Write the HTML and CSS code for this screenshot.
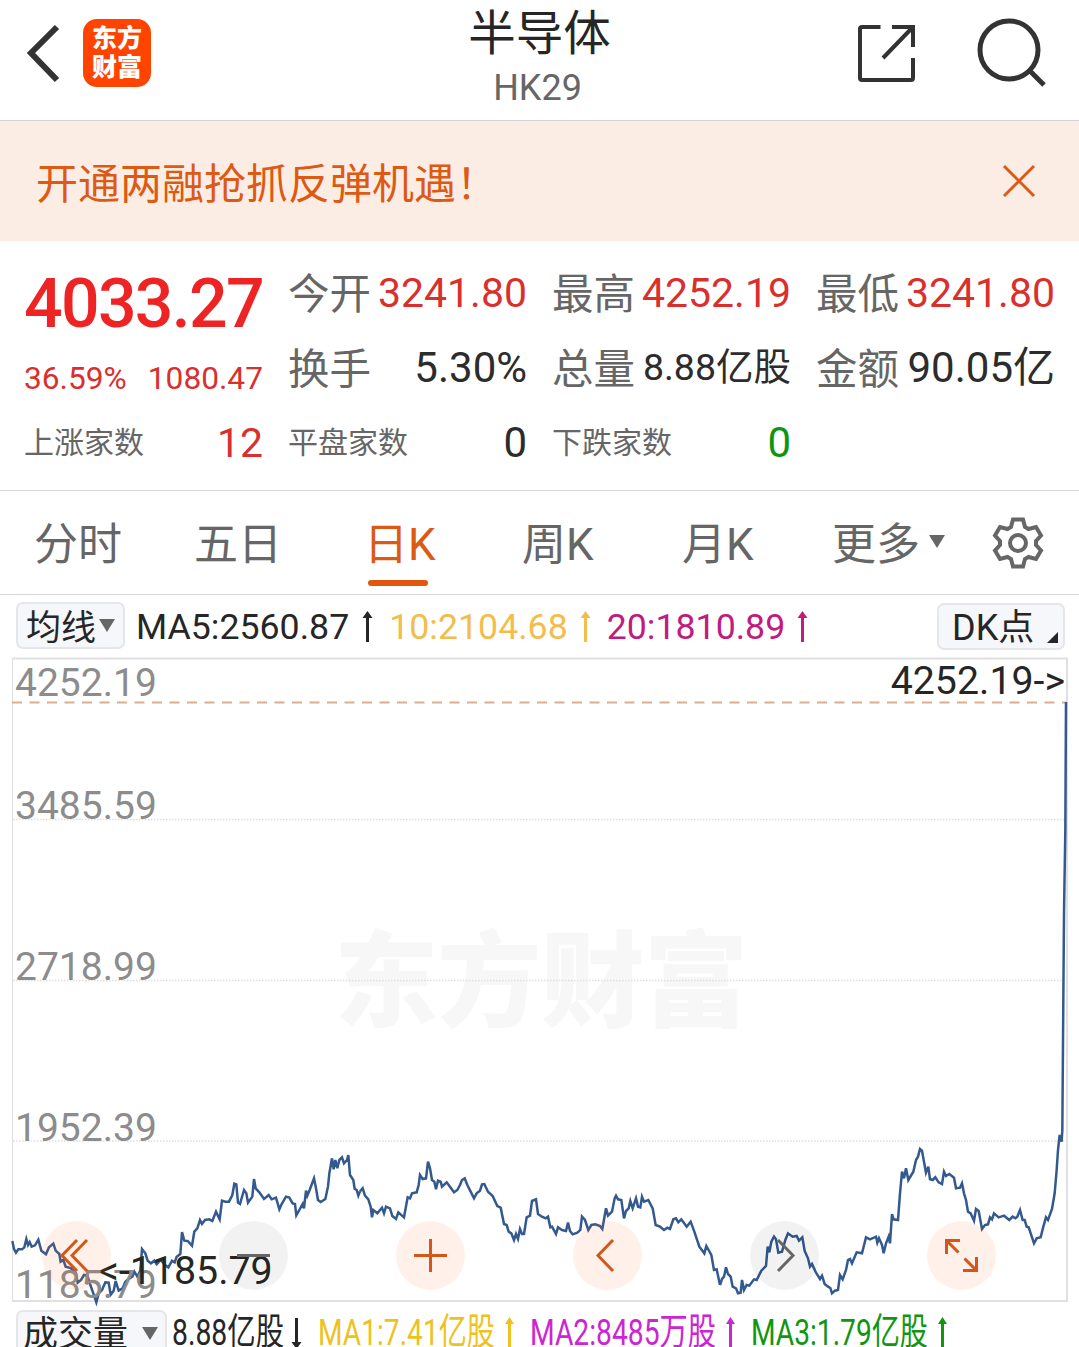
FILE: index.html
```html
<!DOCTYPE html>
<html lang="zh-CN">
<head>
    <meta charset="UTF-8">
    <meta name="viewport" content="width=device-width, initial-scale=1.0">
    <title>半导体 HK29</title>
    <link rel="stylesheet" href="styles.css">
</head>
<body>
    <!-- Header -->
    <header class="header">
        <div class="header-left">
            <svg class="back" width="36" height="60" viewBox="0 0 36 60"><path d="M33 4L7 30L33 57" /></svg>
            <div class="logo"><span>东方</span><span>财富</span></div>
        </div>
        <div class="header-title">
            <h1>半导体</h1>
            <p>HK29</p>
        </div>
        <div class="header-right">
            <svg class="share" width="60" height="60" viewBox="0 0 60 60">
                <path d="M24.500 4H6Q4 4 4 6V55Q4 57 6 57H55Q57 57 57 55V35M36 4H57V24M56 5L27 35" />
            </svg>
            <svg class="search" width="72" height="72" viewBox="0 0 72 72">
                <circle cx="34" cy="33" r="29" />
                <path d="M54 53L69 68" />
            </svg>
        </div>
    </header>

    <!-- Promo banner -->
    <div class="banner">
        <span>开通两融抢抓反弹机遇！</span>
        <svg width="34" height="34" viewBox="0 0 34 34"><path d="M2 2L32 32M32 2L2 32" /></svg>
    </div>

    <!-- Quote -->
    <section class="quote">
        <div class="col">
            <div class="price">4033.27</div>
            <div class="row change"><span>36.59%</span><span>1080.47</span></div>
            <div class="row count"><label>上涨家数</label><b class="red">12</b></div>
        </div>
        <div class="col">
            <div class="row"><label>今开</label><b class="red">3241.80</b></div>
            <div class="row"><label>换手</label><b>5.30%</b></div>
            <div class="row count"><label>平盘家数</label><b>0</b></div>
        </div>
        <div class="col">
            <div class="row"><label>最高</label><b class="red">4252.19</b></div>
            <div class="row"><label>总量</label><b class="small">8.88亿股</b></div>
            <div class="row count"><label>下跌家数</label><b class="green">0</b></div>
        </div>
        <div class="col">
            <div class="row"><label>最低</label><b class="red">3241.80</b></div>
            <div class="row"><label>金额</label><b>90.05亿</b></div>
        </div>
    </section>

    <!-- Period tabs -->
    <nav class="tabs">
        <a class="t1">分时</a>
        <a class="t2">五日</a>
        <a class="t3 active">日K</a>
        <a class="t4">周K</a>
        <a class="t5">月K</a>
        <a class="t6">更多<i class="caret"></i></a>
        <svg class="gear" width="54" height="54" viewBox="-27 -27 54 54">
            <path d="M-5 -23.500H5L7 -16L10.500 -14L18 -16L23 -7.500L18 -2V2L23 7.500L18 16L10.500 14L7 16L5 23.500H-5L-7 16L-10.500 14L-18 16L-23 7.500L-18 2V-2L-23 -7.500L-18 -16L-10.500 -14L-7 -16Z" />
            <circle r="8" />
        </svg>
    </nav>

    <!-- Moving averages -->
    <div class="ma">
        <div class="btn btn-ma"><span>均线</span><i class="caret"></i></div>
        <span class="ma5">MA5:2560.87</span>
        <svg class="arrow" width="11" height="32" viewBox="0 0 11 32"><path d="M5.500 0L10.500 7H7V31H4V7H.5Z" /></svg>
        <span class="ma10">10:2104.68</span>
        <svg class="arrow ma10" width="11" height="32" viewBox="0 0 11 32"><path d="M5.500 0L10.500 7H7V31H4V7H.5Z" /></svg>
        <span class="ma20">20:1810.89</span>
        <svg class="arrow ma20" width="11" height="32" viewBox="0 0 11 32"><path d="M5.500 0L10.500 7H7V31H4V7H.5Z" /></svg>
        <div class="btn btn-dk"><span>DK点</span><i class="corner"></i></div>
    </div>

    <!-- K line chart -->
    <div class="chart">
        <svg width="1079" height="650" viewBox="0 657 1079 650">
            <text class="watermark" x="334" y="1019" textLength="414">东方财富</text>
            <path class="grid" d="M13 819.500H1066M13 980.500H1066M13 1141H1066" />
            <path class="frame" d="M12.500 658V1301" />
            <path class="frame thick" d="M12 658.500H1067V1301H12" />
            <path class="top-line" d="M12 702.500H1066" />
            <g class="line">
                <polyline transform="translate(0 1130) scale(.33333)" points="37,333 42,357 48,368 55,358 66,358 73,352 79,327 84,345 89,336 95,350 105,346 115,329 124,362 138,373 147,352 160,341 167,362 178,372 182,395 190,390 197,410 212,414 228,430 233,458 243,450 252,435 262,437 270,462 280,490 289,517 296,490 306,480 316,457 326,458 332,494 341,482 347,453 356,482 368,475 376,455 385,448 397,440 403,425 412,440 421,422 426,357 436,370 443,392 453,400 463,392 470,403 482,390 495,405 505,412 516,392 524,397 530,380 541,372 546,306 553,332 563,333 576,347 583,305 592,295 600,270 606,282 615,270 628,268 637,273 648,245 659,268 666,212 676,215 687,215 697,195 703,161 709,163 714,218 720,222 732,180 739,190 744,218 757,200 762,147 767,175 778,187 792,207 806,195 815,208 828,203 838,238 845,222 858,200 868,203 878,220 885,222 889,256 898,240 908,222 912,235 918,182 922,197 929,180 942,145 948,175 954,210 962,216 976,207 984,170 988,130 996,85 1001,118 1006,90 1012,115 1018,90 1026,82 1032,100 1041,90 1045,75 1050,135 1060,150 1064,176 1070,180 1075,197 1080,184" />
                <polyline transform="translate(360 1130) scale(.33333)" points="0,184 8,175 15,197 25,208 32,230 36,262 40,240 52,250 66,233 72,250 78,230 90,235 97,258 108,267 115,247 132,262 143,202 150,205 156,190 170,187 176,165 180,135 188,147 198,145 204,95 210,115 216,150 223,155 228,178 234,152 242,155 246,170 260,157 270,170 282,187 292,180 300,165 306,150 314,145 322,165 332,185 342,205 350,190 360,182 366,163 373,162 384,185 398,198 412,228 422,233 432,282 440,285 446,305 454,310 462,330 468,312 474,327 480,297 486,312 492,312 500,262 510,257 516,213 528,208 534,252 546,260 557,265 564,260 571,292 576,290 588,312 594,292 606,300 618,303 624,278 630,303 638,313 652,308 661,300 666,260 675,270 685,300 694,285 706,283 720,288 727,297 738,235 744,257 756,245 764,205 768,197 774,208 784,210 792,265 798,243 806,235 811,213 818,235 828,205 834,230 841,232 846,200 852,215 865,210 878,235 887,285 900,290 912,300 922,293 930,297 940,268 948,265 955,277 964,268 980,290 992,275 1004,308 1018,350 1033,370 1039,348 1054,375 1062,420 1070,418 1080,465" />
                <polyline transform="translate(720 1130) scale(.33333)" points="0,465 6,447 12,440 18,412 24,432 32,440 38,470 48,475 54,490 62,488 66,450 72,480 80,465 88,467 102,448 110,450 124,422 138,408 143,350 148,367 154,335 162,320 168,328 175,368 186,365 196,330 204,310 218,320 230,318 237,332 247,322 254,363 264,385 270,410 276,402 288,428 300,447 306,437 314,462 324,470 331,474 336,490 345,482 354,480 360,435 368,448 378,420 384,390 390,387 396,400 410,367 426,370 438,322 450,328 468,320 472,338 477,325 486,345 491,370 498,340 506,320 510,340 516,252 521,268 534,270 540,190 546,125 552,145 558,115 565,150 580,125 588,90 594,80 600,57 606,62 612,95 618,128 625,110 630,148 638,150 646,142 656,157 666,162 672,125 678,138 688,132 702,143 708,175 720,173 726,160 732,190 738,210 744,245 752,250 762,272 768,237 776,243 786,297 795,285 804,283 810,262 816,268 822,250 836,262 852,257 868,270 878,260 886,265 892,260 900,240 908,270 914,270 920,290 926,292 942,340 950,325 962,322 970,290 978,262 984,270 996,237 1004,190 1010,120 1014,60 1019,15 1025,35 1027,0 1032,-650 1036,-900 1038,-1284" />
            </g>
            <text class="axis" x="15" y="696">4252.19</text>
            <text class="axis" x="15" y="819">3485.59</text>
            <text class="axis" x="15" y="980">2718.99</text>
            <text class="axis" x="15" y="1141">1952.39</text>
            <text class="axis" x="15" y="1298">1185.79</text>
            <text class="mark" x="1065" y="694" text-anchor="end">4252.19-&gt;</text>
            <text class="mark" x="99" y="1284">&lt;-1185.79</text>
        </svg>

        <div class="controls">
            <button><svg viewBox="0 0 69 69"><path d="M35 19L20 34.500L35 50M45 19L30 34.500L45 50" /></svg></button>
            <button class="off"><svg viewBox="0 0 69 69"><path d="M18 34.500H51" /></svg></button>
            <button><svg viewBox="0 0 69 69"><path d="M18 34.500H51M34.500 18V51" /></svg></button>
            <button><svg viewBox="0 0 69 69"><path d="M40 19L25 34.500L40 50" /></svg></button>
            <button class="off"><svg viewBox="0 0 69 69"><path d="M28 19L43 34.500L28 50" /></svg></button>
            <button><svg viewBox="0 0 69 69"><path d="M19.500 33V19.500H33M20 20L31.500 31.500M37.500 37.500L49 49M49.500 36V49.500H36" /></svg></button>
        </div>
    </div>

    <!-- Volume -->
    <div class="volume">
        <div class="btn btn-vol"><span>成交量</span><i class="caret"></i></div>
        <svg width="900" height="46" viewBox="172 1306 900 46">
            <g class="ma5">
                <text x="172" y="1345" textLength="112" lengthAdjust="spacingAndGlyphs">8.88亿股</text>
                <path d="M295 1318H298V1342H301.500L296.500 1349L291.500 1342H295Z" />
            </g>
            <g class="vol1">
                <text x="318" y="1345" textLength="177" lengthAdjust="spacingAndGlyphs">MA1:7.41亿股</text>
                <path d="M509.500 1317L514 1324H511V1349H508V1324H505Z" />
            </g>
            <g class="vol2">
                <text x="530" y="1345" textLength="186" lengthAdjust="spacingAndGlyphs">MA2:8485万股</text>
                <path d="M730.500 1317L735 1324H732V1349H729V1324H726Z" />
            </g>
            <g class="vol3">
                <text x="751" y="1345" textLength="177" lengthAdjust="spacingAndGlyphs">MA3:1.79亿股</text>
                <path d="M942.500 1317L947 1324H944V1349H941V1324H938Z" />
            </g>
        </svg>
    </div>
</body>
</html>
```

FILE: styles.css
```css
* {
    box-sizing: border-box;
    margin: 0;
    padding: 0;
}

body {
    width: 1079px;
    height: 1347px;
    overflow: hidden;
    background: #fff;
    color: #262626;
    font-family: Roboto, "Noto Sans CJK SC", sans-serif;
}

svg {
    display: block;
    flex: none;
    fill: none;
}

/* Header */
.header {
    display: flex;
    justify-content: space-between;
    height: 121px;
    border-bottom: 1px solid #d3d3d8;
}

.header-left,
.header-right {
    display: flex;
    width: 300px;
}

.header-left {
    padding: 19px 0 0 25px;
}

.header-right {
    padding: 17px 0 0 75px;
}

.back {
    margin: 4px 22px 0 -1px;
    stroke: #333;
    stroke-width: 6;
}

.logo {
    display: flex;
    flex-direction: column;
    align-items: center;
    width: 68px;
    height: 68px;
    margin-left: 1px;
    padding-top: 5px;
    border-radius: 14px;
    background: #ff4400;
    color: #fff;
    font-size: 25px;
    font-weight: 900;
    line-height: 29px;
}

.header-title {
    text-align: center;
    margin-left: -2px;
}

.header-title h1 {
    padding: 2px 0 0 2px;
    font-size: 47.500px;
    font-weight: 400;
    line-height: 64px;
}

.header-title p {
    margin-left: -2px;
    color: #666;
    font-size: 36px;
    line-height: 44px;
}

.share {
    margin: 6px 59px 0 2px;
    stroke: #333;
    stroke-width: 4;
}

.search {
    stroke: #333;
    stroke-width: 5;
}

/* Banner */
.banner {
    display: flex;
    align-items: center;
    justify-content: space-between;
    height: 120px;
    padding: 0 43px 0 36px;
    background: #fcede4;
    color: #dc5a14;
    font-size: 42px;
}

.banner span {
    margin-top: -1px;
}

.banner svg {
    stroke: #dc5a14;
    stroke-width: 3;
}

/* Quote */
.quote {
    display: flex;
    gap: 25px;
    height: 250px;
    padding: 14px 23px 0 24px;
    border-bottom: 1px solid #d8d8d8;
}

.col {
    width: 239px;
}

.row {
    display: flex;
    justify-content: space-between;
    align-items: center;
    height: 75px;
    line-height: 50px;
    white-space: nowrap;
}

.row label {
    margin-top: 4px;
    color: #666;
    font-size: 41.500px;
}

.row b {
    color: #2c2c2c;
    font-size: 42px;
    font-weight: 400;
}

.row b.small {
    margin-top: -1px;
    font-size: 37.500px;
}

.row.count label {
    margin-top: 1px;
    font-size: 30px;
}

.row .red {
    color: #d9302e;
    font-size: 41px;
}

.row .green {
    color: #0d960d;
}

.price {
    height: 96px;
    color: #ee2424;
    font-size: 68px;
    font-weight: 500;
    line-height: 99px;
    letter-spacing: -1.700px;
}

.row.change {
    height: 54px;
    padding-top: 2px;
    color: #d9302e;
    font-size: 31.700px;
}

/* Tabs */
.tabs {
    display: flex;
    height: 104px;
    padding-left: 34px;
    border-bottom: 1px solid #d8d8d8;
    color: #666;
    font-size: 44px;
    line-height: 109px;
}

.tabs a {
    position: relative;
    height: 104px;
    white-space: nowrap;
}

.t1 { width: 160px; }
.t2 { width: 170px; }
.t3 { width: 158px; }
.t4 { width: 160px; }
.t5 { width: 150px; }
.t6 { width: 160px; }

.tabs .active {
    color: #dc5a14;
}

.tabs .active::after {
    content: "";
    position: absolute;
    left: 4px;
    bottom: 9px;
    width: 60px;
    height: 6px;
    border-radius: 3px;
    background: #e0560c;
}

.gear {
    margin: 25px 0 0 -1px;
    stroke: #666;
    stroke-width: 4;
}

.caret {
    display: inline-block;
    border: 8px solid transparent;
    border-top: 13px solid #666;
    border-bottom: 0;
    vertical-align: middle;
}

.tabs .caret {
    margin: -13px 0 0 9px;
}

/* Moving averages */
.ma {
    display: flex;
    align-items: flex-start;
    height: 62px;
    padding: 7px 14px 0 16px;
    font-size: 35.700px;
    line-height: 50px;
}

.ma span {
    white-space: nowrap;
}

.btn {
    display: flex;
    align-items: center;
    height: 47px;
    border: 2px solid #e4e6ea;
    border-radius: 7px;
    background: #f6f7fa;
    font-size: 35px;
    line-height: 44px;
    white-space: nowrap;
}

.btn span {
    padding-top: 3px;
}

.btn-ma {
    width: 109px;
    margin-right: 11px;
    padding-left: 8px;
}

.btn-ma span {
    padding-top: 7px;
}

.btn-ma .caret {
    margin-left: 3px;
}

.arrow {
    margin: 9px 16px 0 13px;
    fill: #262626;
}

.ma10 {
    color: #f3bd4e;
    fill: #f3bd4e;
}

.ma20 {
    color: #c01c80;
    fill: #c01c80;
}

.arrow.ma10,
.arrow.ma20 {
    margin-left: 12px;
}

.btn-dk {
    position: relative;
    width: 128px;
    margin: 1px 0 0 auto;
    padding-left: 13px;
    font-size: 36px;
}

.corner {
    position: absolute;
    right: 5px;
    bottom: 5px;
    border-left: 11px solid transparent;
    border-bottom: 11px solid #262626;
}

/* Chart */
.chart {
    position: relative;
    height: 650px;
}

.watermark {
    fill: #f7f7f7;
    font-size: 104px;
    font-weight: 900;
}

.grid {
    stroke: #dedede;
    stroke-width: 1.500;
    stroke-dasharray: 1.500 1.500;
}

.frame {
    stroke: #e0e0e3;
    stroke-width: 1;
}

.thick {
    stroke-width: 2;
}

.top-line {
    stroke: #dcae8c;
    stroke-width: 1.800;
    stroke-dasharray: 10 7.500;
}

.line {
    stroke: #34598f;
    stroke-width: 7.500;
}

.axis,
.mark {
    font-size: 39px;
    fill: #8c8c8c;
}

.mark {
    font-size: 39.300px;
    fill: #262626;
}

.controls {
    position: absolute;
    left: 42px;
    bottom: 17px;
    display: flex;
    gap: 108px;
}

.controls button {
    width: 69px;
    height: 69px;
    border: 0;
    border-radius: 50%;
    background: rgba(255, 98, 20, 0.09);
}

.controls svg {
    stroke: #d2581a;
    stroke-width: 3;
}

.controls .off {
    background: rgba(0, 0, 0, 0.05);
}

.controls .off svg {
    stroke: #666;
}

/* Volume */
.volume {
    display: flex;
    padding-left: 16px;
}

.btn-vol {
    width: 151px;
    height: 50px;
    margin: 3px 5px 0 0;
    padding-left: 5px;
}

.btn-vol span {
    padding-top: 0;
}

.btn-vol .caret {
    margin: -4px 0 0 14px;
}

.volume svg {
    margin-top: -1px;
    font-size: 37px;
}

.volume .ma5 {
    fill: #262626;
}

.vol1 {
    fill: #eec21e;
}

.vol2 {
    fill: #cb26d3;
}

.vol3 {
    fill: #12960f;
}
```
